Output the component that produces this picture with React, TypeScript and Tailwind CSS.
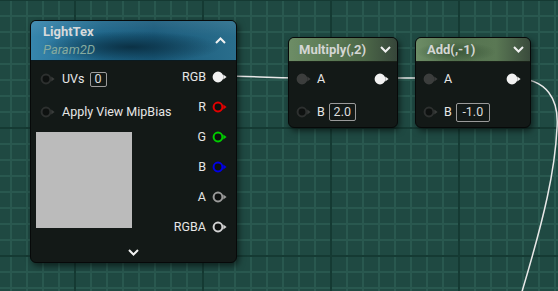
import React from "react";

const Pin = ({ ring, fill, tri }: { ring: string; fill: string; tri?: string }) => (
  <svg width="15" height="12" viewBox="0 0 15 12" className="shrink-0">
    <circle cx="6" cy="6" r="4.4" fill={fill} stroke={ring} strokeWidth="2" />
    <path d="M11.3 3.4 L14.6 6 L11.3 8.6 Z" fill={tri ?? ring} />
  </svg>
);

const Off = () => <Pin ring="#2d302f" fill="#0e1110" tri="#3a3d3c" />;
const On = () => <Pin ring="#3c3e3d" fill="#3c3e3d" />;
const Out = () => <Pin ring="#f2f2f2" fill="#f2f2f2" />;

const Chevron = ({ up }: { up?: boolean }) => (
  <svg width="11" height="7" viewBox="0 0 11 7">
    <path d={up ? "M1 6 L5.5 1.5 L10 6" : "M1 1 L5.5 5.5 L10 1"} fill="none" stroke="#f0f0f0" strokeWidth="2" />
  </svg>
);

const ValueBox = ({ v, w }: { v: string; w: string }) => (
  <div className={`${w} flex items-center justify-center border border-[#9b9b9b] rounded-[2px] text-[12.5px] leading-none text-[#dcdcdc]`}>
    {v}
  </div>
);

const OutRow = ({ label, pin }: { label: string; pin: React.ReactNode }) => (
  <div className="h-[30px] flex items-center justify-end gap-[6px]">
    <span className="text-[12.5px] leading-none text-[#e6e6e6] whitespace-nowrap">{label}</span>
    {pin}
  </div>
);

const Background = () => (
  <svg className="absolute inset-0" width="558" height="291">
    <defs>
      <pattern id="minor" width="16" height="16" patternUnits="userSpaceOnUse" x="10" y="-1">
        <rect width="16" height="16" fill="#1f4942" />
        <rect x="0" y="0" width="2" height="16" fill="#29584f" />
        <rect x="0" y="0" width="16" height="2" fill="#29584f" />
      </pattern>
      <pattern id="major" width="128" height="128" patternUnits="userSpaceOnUse" x="74" y="-1">
        <rect x="0" y="0" width="2" height="128" fill="#153a33" />
        <rect x="0" y="0" width="128" height="2" fill="#153a33" />
      </pattern>
    </defs>
    <rect width="558" height="291" fill="url(#minor)" />
    <rect width="558" height="291" fill="url(#major)" />
    <g fill="none" stroke="#e8e8e8" strokeWidth="1.5">
      <path d="M218 76 C258 76, 262 78, 302 78" />
      <path d="M380 78 L429 78" />
      <path d="M512 78 C548 78, 559 100, 557 128 C555 170, 545 215, 521 295" />
    </g>
  </svg>
);

export default function App() {
  return (
    <div className="relative w-[558px] h-[291px] overflow-hidden bg-[#1f4942] font-['Roboto',sans-serif]">
      <Background />

      {/* LightTex */}
      <div className="absolute left-[30px] top-[20px] w-[207px] flex flex-col rounded-[6px] border border-[#070909] bg-[#131917] shadow-[2px_3px_6px_rgba(0,0,0,0.55)] overflow-hidden">
        <div className="h-[40px] flex items-center justify-between pl-[12px] pr-[10px] border-b border-[#0b1a20] bg-[radial-gradient(ellipse_90px_16px_at_100px_26px,#0b3145_0%,rgba(11,49,69,0)_100%),linear-gradient(180deg,rgba(255,255,255,0.08)_0%,rgba(0,0,0,0)_40%),linear-gradient(90deg,#3786ad_0%,#1d6589_35%,#195a7b_60%,#2a6e8c_100%)]">
          <div className="flex flex-col gap-[5px]">
            <span className="text-[13px] leading-none font-bold text-[#d8dadb]">LightTex</span>
            <span className="text-[13px] leading-none italic text-[#86ab9f]">Param2D</span>
          </div>
          <Chevron up />
        </div>
        <div className="flex justify-between">
          <div className="flex flex-col shrink-0 pt-[5px] pl-[5px]">
            <div className="h-[26px] flex items-center pl-[4px]">
              <Off />
              <span className="ml-[7px] text-[12.5px] leading-none text-[#e6e6e6]">UVs</span>
              <div className="ml-[5px]">
                <ValueBox v="0" w="w-[17px] h-[15px]" />
              </div>
            </div>
            <div className="mt-[7px] h-[26px] flex items-center pl-[4px]">
              <Off />
              <span className="ml-[7px] text-[12.5px] leading-none text-[#e6e6e6] whitespace-nowrap">Apply View MipBias</span>
            </div>
            <div className="mt-[7px] w-[96px] h-[96px] bg-[#bbbbbb]" />
          </div>
          <div className="flex flex-col shrink-0 pt-[1px] pr-[9px]">
            <OutRow label="RGB" pin={<Out />} />
            <OutRow label="R" pin={<Pin ring="#e40000" fill="#0e1110" />} />
            <OutRow label="G" pin={<Pin ring="#00cc00" fill="#0e1110" />} />
            <OutRow label="B" pin={<Pin ring="#0000e6" fill="#0e1110" />} />
            <OutRow label="A" pin={<Pin ring="#9a9a9a" fill="#0e1110" />} />
            <OutRow label="RGBA" pin={<Pin ring="#d2d2d2" fill="#0e1110" />} />
          </div>
        </div>
        <div className="h-[20px] flex items-center justify-center">
          <Chevron />
        </div>
      </div>

      {/* Multiply */}
      <div className="absolute left-[288px] top-[37px] w-[110px] h-[91px] flex flex-col rounded-[6px] border border-[#070909] bg-[#131917] shadow-[2px_3px_6px_rgba(0,0,0,0.55)] overflow-hidden">
        <div className="h-[24px] flex items-center justify-between pl-[10px] pr-[6px] border-b border-[#1a2219] bg-[linear-gradient(90deg,#6d8d66_0%,#5a7954_40%,#4c6748_70%,#36463a_100%)]">
          <span className="text-[13px] leading-none font-bold text-[#d4d6d4]">Multiply(,2)</span>
          <Chevron />
        </div>
        <div className="flex justify-between pt-[4px]">
          <div className="flex flex-col pl-[7px]">
            <div className="h-[26px] flex items-center">
              <On />
              <span className="ml-[6px] text-[12.5px] leading-none text-[#e6e6e6]">A</span>
            </div>
            <div className="mt-[7px] h-[26px] flex items-center">
              <Off />
              <span className="ml-[6px] text-[12.5px] leading-none text-[#e6e6e6]">B</span>
              <div className="ml-[4px]">
                <ValueBox v="2.0" w="w-[27px] h-[18px]" />
              </div>
            </div>
          </div>
          <div className="flex flex-col pr-[8px]">
            <div className="h-[26px] flex items-center">
              <Out />
            </div>
          </div>
        </div>
      </div>

      {/* Add */}
      <div className="absolute left-[415px] top-[37px] w-[116px] h-[91px] flex flex-col rounded-[6px] border border-[#070909] bg-[#131917] shadow-[2px_3px_6px_rgba(0,0,0,0.55)] overflow-hidden">
        <div className="h-[24px] flex items-center justify-between pl-[11px] pr-[6px] border-b border-[#1a2219] bg-[radial-gradient(ellipse_40px_10px_at_40px_14px,#3c583a_0%,rgba(60,88,58,0)_100%),linear-gradient(90deg,#6d8d66_0%,#557350_35%,#5a7854_70%,#3a4b3c_100%)]">
          <span className="text-[13px] leading-none font-bold text-[#d4d6d4]">Add(,-1)</span>
          <Chevron />
        </div>
        <div className="flex justify-between pt-[4px]">
          <div className="flex flex-col pl-[7px]">
            <div className="h-[26px] flex items-center">
              <On />
              <span className="ml-[6px] text-[12.5px] leading-none text-[#e6e6e6]">A</span>
            </div>
            <div className="mt-[7px] h-[26px] flex items-center">
              <Off />
              <span className="ml-[6px] text-[12.5px] leading-none text-[#e6e6e6]">B</span>
              <div className="ml-[4px]">
                <ValueBox v="-1.0" w="w-[34px] h-[19px]" />
              </div>
            </div>
          </div>
          <div className="flex flex-col pr-[9px]">
            <div className="h-[26px] flex items-center">
              <Out />
            </div>
          </div>
        </div>
      </div>
    </div>
  );
}
